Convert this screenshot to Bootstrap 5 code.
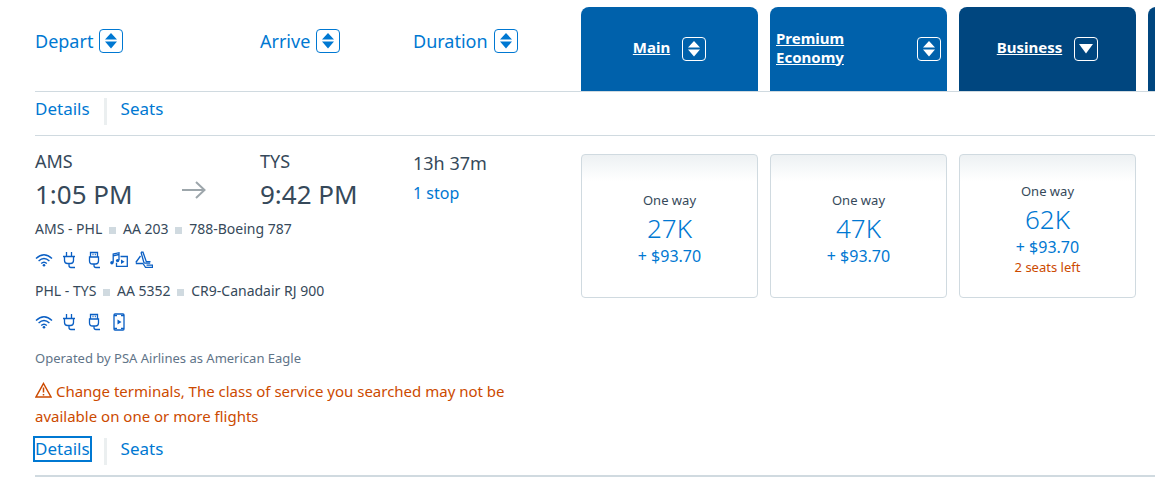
<!DOCTYPE html>
<html lang="en">
<head>
<meta charset="utf-8">
<meta name="viewport" content="width=device-width, initial-scale=1">
<title>Choose flights</title>
<link href="https://cdn.jsdelivr.net/npm/bootstrap@5.3.0/dist/css/bootstrap.min.css" rel="stylesheet">
<style>
  :root { --link: #0078d2; --ink: #36495a; --rule: #d0dae0; --warn: #cc4a00; }
  body { font-family: "Noto Sans", "Open Sans", sans-serif; color: var(--ink); font-size: 16px; line-height: 24px; }
  a { color: var(--link); text-decoration: none; }
  .results { padding: 7px 0 0 35px; }
  .split { display: grid; grid-template-columns: minmax(0, 1fr) 574px; }
  .legs { display: grid; grid-template-columns: 225fr 153fr 168fr; }
  .fares { display: grid; grid-template-columns: repeat(4, 177px); gap: 12px; }
  .rule { border-bottom: 1px solid var(--rule); }
  .rule-end { border-bottom: 2px solid var(--rule); padding-bottom: 10px; }

  .sort { color: var(--link); font-size: 18px; background: none; border: 0; padding: 0; gap: 6px; }
  .sort-row { padding-bottom: 16px; }
  .arrows { width: 24px; height: 24px; border: 1px solid currentColor; border-radius: 4px; flex: none; }
  .cabin { height: 84px; border: 0; border-radius: 8px 8px 0 0; background: #0061ab; color: #fff; font-size: 15px; font-weight: 700; line-height: 19px; padding: 0 6px; gap: 12px; }
  .cabin.active { background: #00467f; }
  .cabin u { padding-bottom: 3px; }

  .actions { height: 27px; }
  .actions-top { padding: 6px 0 10px; }
  .actions a { font-size: 17px; line-height: 22px; }
  .actions a + a { border-left: 3px solid #ebeff0; margin-left: 14px; padding-left: 14px; height: 27px; }
  .actions .focused { outline: 2px solid var(--link); height: 22px; }
  .journey { padding-top: 13px; }
  .code { font-size: 18px; }
  .length { font-size: 18px; line-height: 28px; }
  .time { font-size: 26px; line-height: 42px; }
  .way { color: #9da6ab; padding: 16px 54px 0 0; }
  .segment { font-size: 14px; line-height: 28px; }
  .segment span + span::before { content: ""; display: inline-block; width: 7px; height: 7px; background: var(--rule); margin: 0 7px 0 3px; }
  .amenities { height: 34px; color: #0a5fc4; gap: 7px; }
  .operated { font-size: 13px; color: #5f7488; margin-top: 7px; }
  .notice { color: var(--warn); font-size: 15px; line-height: 25px; max-width: 490px; margin: 9px 0; }
  .notice svg { vertical-align: -1px; }

  .fare { height: 144px; border: 1px solid var(--rule); border-radius: 4px; background: linear-gradient(#edf1f3, #fff 26px); padding: 4px 0 0; color: var(--link); margin-top: 18px; }
  .fare .kind { color: var(--ink); font-size: 13px; line-height: 22px; }
  .fare .miles { font-size: 26px; line-height: 34px; font-weight: 300; }
  .fare .fee { line-height: 22px; }
  .fare .left { color: var(--warn); font-size: 13px; line-height: 18px; }
</style>
</head>
<body class="overflow-x-hidden">
<svg class="d-none" aria-hidden="true">
  <defs>
    <symbol id="updown" viewBox="0 0 22 22"><path fill="currentColor" d="M11 3l6 6.500H5zM5 11.500h12l-6 7z"/></symbol>
    <symbol id="down" viewBox="0 0 22 22"><path fill="currentColor" d="M4 6h14l-7 9.500z"/></symbol>
    <symbol id="wifi" viewBox="0 0 18 18"><g fill="none" stroke="currentColor" stroke-width="1.400"><path d="M1 7.500q8-7.500 16 0M3.600 10q5.400-5 10.800 0M6.200 12.500q2.800-2.600 5.600 0"/></g><circle cx="9" cy="14.200" r="1.300" fill="currentColor"/></symbol>
    <symbol id="plug" viewBox="0 0 18 18"><path fill="none" stroke="currentColor" stroke-width="1.300" d="M6.500 1v4.500M11.500 1v4.500M3 5.500h12M4.500 5.500v4q0 3 3 3h3q3 0 3-3v-4M9 12.500v2q0 2 2 2h4"/></symbol>
    <symbol id="usb" viewBox="0 0 18 18"><path fill="none" stroke="currentColor" stroke-width="1.300" d="M5.500 6V1.500h7V6M7.500 3.500h1M9.800 3.500h1M4.500 6h9v4q0 3-3 3h-3q-3 0-3-3zM9 13v1.500q0 2 2 2h4"/></symbol>
    <symbol id="media" viewBox="0 0 18 18"><g fill="none" stroke="currentColor" stroke-width="1.300"><path d="M3.200 11.500V3L9 1.700V9M3.200 4.800L9 3.500M10.500 5.500h6.800v9.800H6.500v-3.500"/></g><g fill="currentColor"><circle cx="1.900" cy="11.800" r="1.700"/><circle cx="7.600" cy="9.600" r="1.700"/><path d="M11 8.500l3.600 2.300-3.600 2.300z"/></g></symbol>
    <symbol id="seat" viewBox="0 0 18 18"><path fill="none" stroke="currentColor" stroke-width="1.300" d="M6 1.200h2l3.300 9.500h4.200M6 1.200l2.800 10q.3 1 1.400 1h5M5.500 5L.8 11.500M.8 12.500H8M8 12.500l2.500 3.800h7v-2.200h-6"/></symbol>
    <symbol id="phone" viewBox="0 0 18 18"><g fill="none" stroke="currentColor" stroke-width="1.300"><rect x="4" y="1" width="10" height="16" rx="1"/><path d="M4 2.600h3M11 2.600h3M4 15.400h3M11 15.400h3"/></g><path fill="currentColor" d="M7.500 6.500l4 2.500-4 2.500z"/></symbol>
  </defs>
</svg>

<main class="results">
  <div class="split rule">
    <div class="legs sort-row align-items-center">
      <button class="sort d-flex align-items-center" type="button">Depart<svg class="arrows" aria-hidden="true"><use href="#updown"/></svg></button>
      <button class="sort d-flex align-items-center" type="button">Arrive<svg class="arrows" aria-hidden="true"><use href="#updown"/></svg></button>
      <button class="sort d-flex align-items-center" type="button">Duration<svg class="arrows" aria-hidden="true"><use href="#updown"/></svg></button>
    </div>
    <div class="fares overflow-hidden">
      <button class="cabin d-flex align-items-center justify-content-center" type="button"><u>Main</u><svg class="arrows" aria-hidden="true"><use href="#updown"/></svg></button>
      <button class="cabin d-flex align-items-center justify-content-between text-start" type="button"><u>Premium<br>Economy</u><svg class="arrows" aria-hidden="true"><use href="#updown"/></svg></button>
      <button class="cabin active d-flex align-items-center justify-content-center" type="button"><u>Business</u><svg class="arrows" aria-hidden="true"><use href="#down"/></svg></button>
      <button class="cabin active" type="button" aria-label="More cabins"></button>
    </div>
  </div>

  <div class="actions-top rule">
    <nav class="actions d-flex" aria-label="Previous flight"><a href="#">Details</a><a href="#">Seats</a></nav>
  </div>

  <article class="split rule-end">
    <div>
      <div class="legs journey">
        <div class="d-flex justify-content-between align-items-center">
          <div><div class="code">AMS</div><div class="time">1:05 PM</div></div>
          <span class="way"><svg class="d-block" width="24" height="20" viewBox="0 0 24 20" fill="none" stroke="currentColor" stroke-width="2" aria-hidden="true"><path d="M0 10h22M14 2l8.500 8-8.500 8"/></svg></span>
        </div>
        <div><div class="code">TYS</div><div class="time">9:42 PM</div></div>
        <div><div class="length">13h 37m</div><a class="d-block mt-1" href="#">1 stop</a></div>
      </div>
      <div class="segment"><span>AMS - PHL</span> <span>AA 203</span> <span>788-Boeing 787</span></div>
      <div class="amenities d-flex align-items-center">
        <svg width="18" height="18"><use href="#wifi"/></svg><svg width="18" height="18"><use href="#plug"/></svg><svg width="18" height="18"><use href="#usb"/></svg><svg width="18" height="18"><use href="#media"/></svg><svg width="18" height="18"><use href="#seat"/></svg>
      </div>
      <div class="segment"><span>PHL - TYS</span> <span>AA 5352</span> <span>CR9-Canadair RJ 900</span></div>
      <div class="amenities d-flex align-items-center">
        <svg width="18" height="18"><use href="#wifi"/></svg><svg width="18" height="18"><use href="#plug"/></svg><svg width="18" height="18"><use href="#usb"/></svg><svg width="18" height="18"><use href="#phone"/></svg>
      </div>
      <div class="operated">Operated by PSA Airlines as American Eagle</div>
      <p class="notice"><svg width="17" height="16" viewBox="0 0 17 16" fill="none" stroke="currentColor" stroke-width="1.500" aria-hidden="true"><path d="M8.500 1.500L16 15H1zM8.500 5.500v5M8.500 12v1.500"/></svg> Change terminals, The class of service you searched may not be available on one or more flights</p>
      <nav class="actions d-flex" aria-label="This flight"><a class="focused" href="#">Details</a><a href="#">Seats</a></nav>
    </div>
    <div class="fares align-content-start">
      <a class="fare d-flex flex-column justify-content-center text-center" href="#"><span class="kind">One way</span><span class="miles">27K</span><span class="fee">+ $93.70</span></a>
      <a class="fare d-flex flex-column justify-content-center text-center" href="#"><span class="kind">One way</span><span class="miles">47K</span><span class="fee">+ $93.70</span></a>
      <a class="fare d-flex flex-column justify-content-center text-center" href="#"><span class="kind">One way</span><span class="miles">62K</span><span class="fee">+ $93.70</span><span class="left">2 seats left</span></a>
    </div>
  </article>
</main>
<script src="https://cdn.jsdelivr.net/npm/bootstrap@5.3.0/dist/js/bootstrap.bundle.min.js"></script>
</body>
</html>
